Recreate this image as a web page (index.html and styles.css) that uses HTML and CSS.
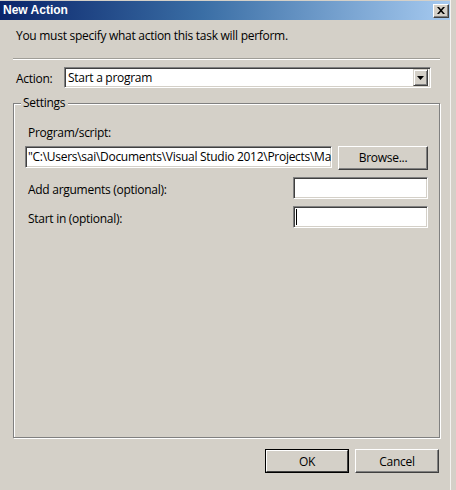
FILE: index.html
```html
<!DOCTYPE html>
<html>
<head>
<meta charset="utf-8">
<link rel="stylesheet" href="styles.css">
</head>
<body>
<div class="screen">
  <div class="frame">
    <div class="titlebar">
      <span class="title">New Action</span>
      <span class="close"><svg width="8" height="7" viewBox="0 0 8 7"><path d="M0 0h2l2 2.2 2-2.2h2l-3 3.5 3 3.5h-2l-2-2.2-2 2.2h-2l3-3.5z" fill="#000"/></svg></span>
    </div>
    <div class="client">
      <p class="intro">You must specify what action this task will perform.</p>
      <div class="sep"></div>
      <div class="action-row">
        <span class="label">Action:</span>
        <div class="combo">
          <span class="combo-text">Start a program</span>
          <span class="drop"><svg width="7" height="4" viewBox="0 0 7 4"><path d="M0 0h7l-3.5 4z" fill="#000"/></svg></span>
        </div>
      </div>
      <div class="group">
        <span class="legend">Settings</span>
        <div class="field-label">Program/script:</div>
        <div class="prog-row">
          <div class="textbox prog"><span class="tb-text">"C:\Users\sai\Documents\Visual Studio 2012\Projects\Ma</span></div>
          <div class="btn browse">Browse...</div>
        </div>
        <div class="opt-row">
          <span class="opt-label">Add arguments (optional):</span>
          <div class="textbox small"></div>
        </div>
        <div class="opt-row">
          <span class="opt-label">Start in (optional):</span>
          <div class="textbox small"><span class="caret"></span></div>
        </div>
      </div>
      <div class="footer">
        <div class="btn default"><span class="btn-inner">OK</span></div>
        <div class="btn cancel">Cancel</div>
      </div>
    </div>
  </div>
</div>
</body>
</html>
```

FILE: styles.css
```css
html, body {
  margin: 0;
  padding: 0;
  background: #d4d0c8;
}

body {
  font-family: "Open Sans", "Noto Sans", sans-serif;
  font-size: 12px;
  letter-spacing: -0.28px;
  color: #000;
}

.screen {
  width: 456px;
  height: 490px;
  overflow: hidden;
}

.frame {
  width: 451px;
  height: 490px;
  padding-top: 1px;
  box-sizing: border-box;
  border-right: 1px solid #f4f3f0;
}

.titlebar {
  height: 19px;
  display: flex;
  align-items: flex-start;
  justify-content: space-between;
  background: linear-gradient(to right, #0a246a 0%, #3a6ea5 45%, #a6caf0 100%);
}

.title {
  color: #fff;
  font-family: "Liberation Sans", Arial, sans-serif;
  font-weight: bold;
  font-size: 12px;
  letter-spacing: 0;
  line-height: 19px;
  padding-left: 3px;
}

.close {
  width: 16px;
  height: 14px;
  margin-top: 3px;
  margin-right: 1px;
  box-sizing: border-box;
  background: #d4d0c8;
  border-top: 1px solid #fff;
  border-left: 1px solid #fff;
  border-right: 1px solid #404040;
  border-bottom: 1px solid #404040;
  box-shadow: inset -1px -1px 0 #808080;
  display: flex;
  align-items: center;
  justify-content: center;
}

.close svg {
  display: block;
  margin-left: -1px;
  margin-top: -1px;
}

.client {
  display: flex;
  flex-direction: column;
}

.intro {
  margin: 8px 0 0 16px;
  line-height: 16px;
  height: 16px;
}

.sep {
  margin: 14px 0 0 13px;
  width: 427px;
  height: 0;
  border-top: 1px solid #a09e98;
  border-bottom: 1px solid #fff;
}

.action-row {
  display: flex;
  align-items: center;
  margin-top: 7px;
  height: 21px;
}

.label {
  width: 48px;
  padding-left: 16px;
  padding-top: 1px;
}

.combo {
  width: 367px;
  height: 21px;
  box-sizing: border-box;
  background: #fff;
  border-top: 1px solid #808080;
  border-left: 1px solid #808080;
  border-right: 1px solid #fff;
  border-bottom: 1px solid #fff;
  box-shadow: inset 1px 1px 0 #404040, inset -1px -1px 0 #d4d0c8;
  display: flex;
  align-items: center;
  justify-content: space-between;
}

.combo-text {
  padding-left: 3px;
  line-height: 16px;
}

.drop {
  width: 15px;
  height: 17px;
  margin-right: 2px;
  box-sizing: border-box;
  background: #d4d0c8;
  border-top: 1px solid #d4d0c8;
  border-left: 1px solid #d4d0c8;
  border-right: 1px solid #404040;
  border-bottom: 1px solid #404040;
  box-shadow: inset 1px 1px 0 #fff, inset -1px -1px 0 #808080;
  display: flex;
  align-items: center;
  justify-content: center;
}

.drop svg {
  display: block;
}

.group {
  position: relative;
  margin: 15px 0 0 13px;
  width: 427px;
  height: 335px;
  box-sizing: border-box;
  border: 1px solid #808080;
  box-shadow: 1px 1px 0 #fff, inset 1px 1px 0 #fff;
  padding: 21px 11px 0 11px;
}

.legend {
  position: absolute;
  top: -9px;
  left: 7px;
  padding: 0 3px 0 2px;
  background: #d4d0c8;
  line-height: 16px;
}

.field-label {
  padding-left: 3px;
  line-height: 16px;
}

.prog-row {
  display: flex;
  align-items: flex-start;
  gap: 6px;
  margin-top: 5px;
}

.textbox {
  box-sizing: border-box;
  background: #fff;
  border-top: 1px solid #808080;
  border-left: 1px solid #808080;
  border-right: 1px solid #fff;
  border-bottom: 1px solid #fff;
  box-shadow: inset 1px 1px 0 #404040, inset -1px -1px 0 #d4d0c8;
  overflow: hidden;
  white-space: nowrap;
}

.prog {
  width: 307px;
  height: 22px;
  display: flex;
  align-items: center;
}

.tb-text {
  display: block;
  overflow: hidden;
  padding-left: 2px;
  line-height: 16px;
}

.btn {
  box-sizing: border-box;
  background: #d4d0c8;
  border-top: 1px solid #fff;
  border-left: 1px solid #fff;
  border-right: 1px solid #404040;
  border-bottom: 1px solid #404040;
  box-shadow: inset -1px -1px 0 #808080;
  display: flex;
  align-items: center;
  justify-content: center;
  line-height: 16px;
}

.browse {
  width: 90px;
  height: 24px;
}

.opt-row {
  display: flex;
  align-items: center;
  justify-content: space-between;
  margin-top: 7px;
}

.opt-label {
  padding-left: 3px;
  padding-top: 3px;
  line-height: 16px;
}

.small {
  width: 135px;
  height: 22px;
  display: flex;
  align-items: center;
}

.caret {
  display: block;
  width: 1px;
  height: 16px;
  margin-left: 2px;
  background: #000;
}

.footer {
  display: flex;
  justify-content: flex-end;
  gap: 6px;
  width: 439px;
  margin-top: 11px;
}

.footer .btn {
  width: 84px;
  height: 24px;
  padding-top: 1px;
}

.btn.default {
  border: 1px solid #000;
  box-shadow: none;
  padding: 0;
}

.btn-inner {
  width: 100%;
  height: 100%;
  box-sizing: border-box;
  border-top: 1px solid #fff;
  border-left: 1px solid #fff;
  border-right: 1px solid #404040;
  border-bottom: 1px solid #404040;
  display: flex;
  align-items: center;
  justify-content: center;
  padding-top: 1px;
}
```
